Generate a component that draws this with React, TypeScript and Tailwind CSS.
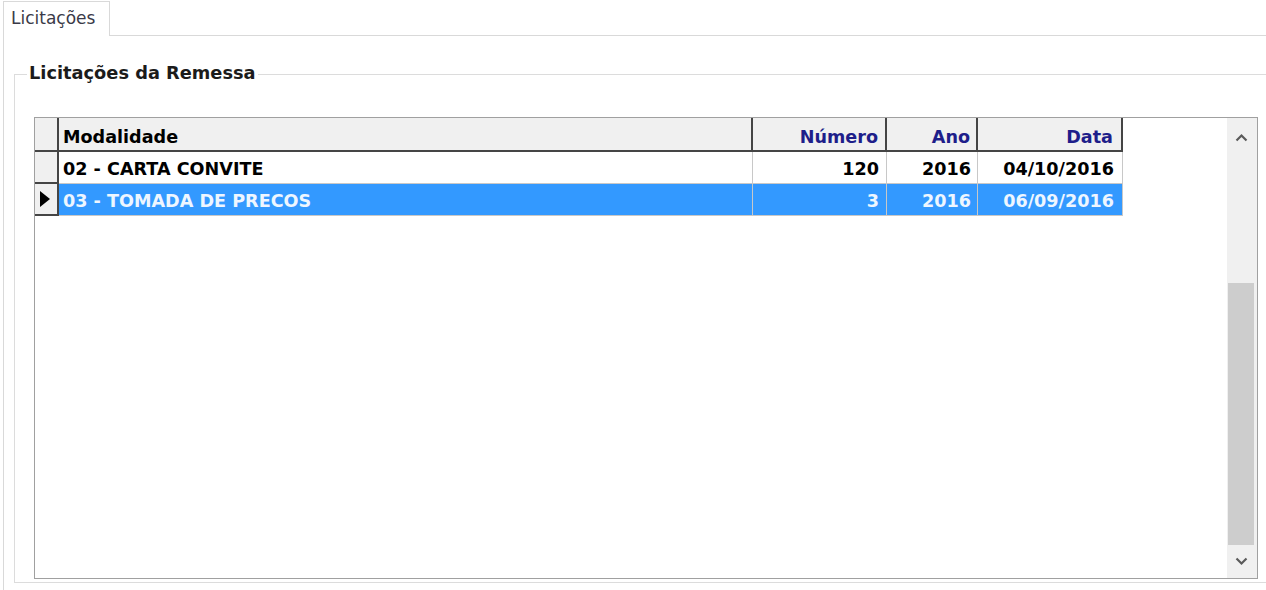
import React from "react";

const cols = [
  { key: "mod", w: "w-[694px]", align: "justify-start pl-[4px]" },
  { key: "num", w: "w-[134px]", align: "justify-end pr-[7px]" },
  { key: "ano", w: "w-[91px]", align: "justify-end pr-[6px]" },
  { key: "data", w: "w-[145px]", align: "justify-end pr-[8px]" },
];

const rows = [
  ["02 - CARTA CONVITE", "120", "2016", "04/10/2016"],
  ["03 - TOMADA DE PRECOS", "3", "2016", "06/09/2016"],
];

function Chevron({ up }: { up?: boolean }) {
  return (
    <svg width="13" height="9" viewBox="0 0 13 9">
      <path
        d={up ? "M1.5 7.5 L6.5 2.5 L11.5 7.5" : "M1.5 1.5 L6.5 6.5 L11.5 1.5"}
        fill="none"
        stroke="#5a5a5a"
        strokeWidth="2.2"
      />
    </svg>
  );
}

export default function App() {
  return (
    <div
      className="w-[1266px] h-[590px] bg-white overflow-hidden text-black"
      style={{ fontFamily: '"DejaVu Sans", sans-serif' }}
    >
      {/* tab strip */}
      <div className="flex h-[36px]">
        <div className="w-[3px] shrink-0" />
        <div className="mt-[1px] w-[107px] h-[35px] shrink-0 border-l border-t border-r border-[#d9d9d9] bg-white pl-[7px] pt-[6px]">
          <div className="text-[17px] leading-[20px] text-[#3a3a48]">Licitações</div>
        </div>
        <div className="flex-1 border-b border-[#d9d9d9]" />
      </div>

      {/* panel */}
      <div className="ml-[3px] h-[554px] border-l border-[#d9d9d9] pt-[38px] pl-[10px]">
        {/* group box */}
        <div className="relative w-[1270px] border-l border-t border-b border-[#dcdcdc] pl-[19px] pt-[42px] pb-[3px]">
          <div className="absolute left-[12px] top-[-12px] bg-white px-[2px] text-[17.8px] leading-[20px] font-bold text-[#1b1b1b]">
            Licitações da Remessa
          </div>

          {/* grid */}
          <div className="w-[1224px] h-[462px] border border-[#a0a0a0] flex">
            <div className="w-[1192px] h-full bg-white flex flex-col">
              {/* header */}
              <div className="flex h-[34px]">
                <div className="w-[24px] h-full bg-[#f0f0f0] border-r-2 border-b-2 border-[#454545]" />
                {cols.map((c, i) => (
                  <div
                    key={c.key}
                    className={`${c.w} h-full bg-[#f0f0f0] border-r-2 border-b-2 border-[#454545] flex items-start pt-[9px] ${c.align}`}
                  >
                    <span
                      className={`text-[17.6px] leading-[20px] font-bold whitespace-nowrap ${
                        i === 0 ? "text-black" : "text-[#1e1e8a]"
                      }`}
                    >
                      {["Modalidade", "Número", "Ano", "Data"][i]}
                    </span>
                  </div>
                ))}
              </div>
              {/* data rows */}
              {rows.map((r, ri) => {
                const sel = ri === 1;
                return (
                  <div key={ri} className="flex h-[32px]">
                    <div className="w-[24px] h-full bg-[#f0f0f0] border-r-2 border-b-2 border-[#454545] flex items-center pl-[5px]">
                      {sel && (
                        <svg width="10" height="16" viewBox="0 0 10 16">
                          <path d="M0 0 L10 8 L0 16 Z" fill="#000" />
                        </svg>
                      )}
                    </div>
                    {cols.map((c, ci) => (
                      <div
                        key={c.key}
                        className={`${c.w} h-full border-r border-b border-[#c8c8c8] flex items-start pt-[7px] ${c.align} ${
                          sel ? "bg-[#3399ff]" : "bg-white"
                        }`}
                      >
                        <span
                          className={`text-[17.6px] leading-[20px] font-bold whitespace-nowrap ${
                            sel ? "text-[#eef6ff]" : "text-black"
                          }`}
                        >
                          {r[ci]}
                        </span>
                      </div>
                    ))}
                  </div>
                );
              })}
            </div>
            {/* scrollbar */}
            <div className="w-[30px] h-full bg-[#f0f0f0] flex flex-col">
              <div className="h-[38px] flex items-center justify-center pr-[2px]">
                <Chevron up />
              </div>
              <div className="h-[127px]" />
              <div className="h-[262px] ml-[1px] mr-[3px] bg-[#cdcdcd]" />
              <div className="flex-1 flex items-center justify-center pr-[2px]">
                <Chevron />
              </div>
            </div>
          </div>
        </div>
      </div>
    </div>
  );
}
